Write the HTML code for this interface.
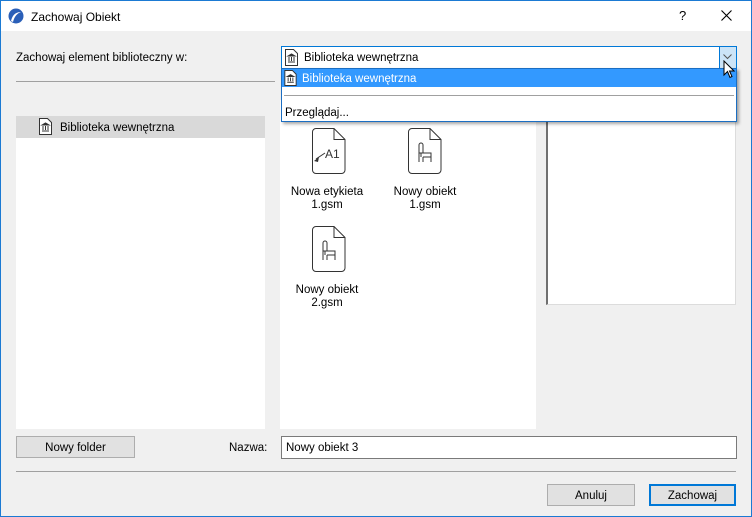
<!DOCTYPE html>
<html><head><meta charset="utf-8"><style>
*{margin:0;padding:0;box-sizing:border-box}
body{width:752px;height:517px;overflow:hidden;font-family:"Liberation Sans",sans-serif;font-size:11.5px;color:#000;background:#f0f0f0;position:relative}
.a{position:absolute}
.win{left:0;top:0;width:752px;height:517px;border:1px solid #1b7ad3;background:#f0f0f0}
.title{left:1px;top:1px;width:750px;height:30px;background:#fff}
.btn{background:#e1e1e1;border:1px solid #adadad;text-align:center;line-height:22px}
.lbl{text-align:center;line-height:13px;width:80px}
</style></head><body>
<div class="a win"></div>
<div class="a title"></div>
<svg class="a" style="left:8px;top:8px" width="16" height="16" viewBox="0 0 16 16"><circle cx="8" cy="8" r="7.5" fill="#2a5fb8"/><path d="M3 13 Q5 4 13 4 Q7 6 5 14Z" fill="#fff"/></svg>
<div class="a" style="left:31px;top:10px;font-size:12px">Zachowaj Obiekt</div>
<div class="a" style="left:679px;top:8px;font-size:13px">?</div>
<svg class="a" style="left:721px;top:10px" width="11" height="11"><path d="M0.5 0.5L10.5 10.5M10.5 0.5L0.5 10.5" stroke="#000" stroke-width="1.1"/></svg>

<div class="a" style="left:16px;top:52px">Zachowaj element biblioteczny w:</div>
<div class="a" style="left:16px;top:81px;width:259px;height:1px;background:#a0a0a0"></div>

<div class="a" style="left:16px;top:116px;width:249px;height:313px;background:#fff"></div>
<div class="a" style="left:16px;top:116px;width:249px;height:22px;background:#d9d9d9"></div>
<svg class="a" style="left:39px;top:118px" width="13" height="17" viewBox="0 0 13 17"><path d="M0.5 0.5H8.5L12.5 4.5V16.5H0.5Z" fill="#fff" stroke="#333"/><path d="M3 7L6.5 5L10 7ZM3 13H10M4 8V12M6.5 8V12M9 8V12" stroke="#333" fill="#333"/></svg>
<div class="a" style="left:60px;top:122px">Biblioteka wewnętrzna</div>

<div class="a" style="left:280px;top:100px;width:256px;height:329px;background:#fff"></div>
<svg class="a" style="left:312px;top:128px" width="34" height="46" viewBox="0 0 34 46"><path d="M4 .5H22L33 11.5V42a3.5 3.5 0 0 1-3.5 3.5H4A3.5 3.5 0 0 1 .5 42V4A3.5 3.5 0 0 1 4 .5Z" fill="#fff" stroke="#333"/><path d="M22 .5V11.5H33" fill="none" stroke="#333"/><text x="13" y="30" font-family="Liberation Sans" font-size="12" fill="#333">A1</text><path d="M13 25L4 31" stroke="#333" fill="none"/><path d="M2 33L7 29L6 34Z" fill="#333"/></svg>
<div class="a lbl" style="left:287px;top:186px">Nowa etykieta<br>1.gsm</div>
<svg class="a" style="left:408px;top:128px" width="34" height="46" viewBox="0 0 34 46"><path d="M4 .5H22L33 11.5V42a3.5 3.5 0 0 1-3.5 3.5H4A3.5 3.5 0 0 1 .5 42V4A3.5 3.5 0 0 1 4 .5Z" fill="#fff" stroke="#333"/><path d="M22 .5V11.5H33" fill="none" stroke="#333"/><path d="M11 34V17a2 2 0 0 1 4 0V25H23V34M11 25H15M15 29H23M15 29V34M13 25V29" fill="none" stroke="#333"/></svg>
<div class="a lbl" style="left:385px;top:186px">Nowy obiekt<br>1.gsm</div>
<svg class="a" style="left:312px;top:226px" width="34" height="46" viewBox="0 0 34 46"><path d="M4 .5H22L33 11.5V42a3.5 3.5 0 0 1-3.5 3.5H4A3.5 3.5 0 0 1 .5 42V4A3.5 3.5 0 0 1 4 .5Z" fill="#fff" stroke="#333"/><path d="M22 .5V11.5H33" fill="none" stroke="#333"/><path d="M11 34V17a2 2 0 0 1 4 0V25H23V34M11 25H15M15 29H23M15 29V34M13 25V29" fill="none" stroke="#333"/></svg>
<div class="a lbl" style="left:287px;top:284px">Nowy obiekt<br>2.gsm</div>

<div class="a" style="left:546px;top:100px;width:190px;height:205px;background:#fff;border:1px solid #dcdcdc;border-left:2px solid #707070"></div>

<div class="a" style="left:281px;top:46px;width:456px;height:23px;background:#fff;border:1px solid #0078d7"></div>
<div class="a" style="left:719px;top:47px;width:17px;height:21px;background:#cce4f7;border-left:1px solid #0078d7"></div>
<svg class="a" style="left:723px;top:54px" width="9" height="6"><path d="M.5 .5L4.5 4.5L8.5 .5" stroke="#555" fill="none"/></svg>
<svg class="a" style="left:285px;top:49px" width="13" height="17" viewBox="0 0 13 17"><path d="M0.5 0.5H8.5L12.5 4.5V16.5H0.5Z" fill="#fff" stroke="#333"/><path d="M3 7L6.5 5L10 7ZM3 13H10M4 8V12M6.5 8V12M9 8V12" stroke="#333" fill="#333"/></svg>
<div class="a" style="left:304px;top:52px">Biblioteka wewnętrzna</div>

<div class="a" style="left:281px;top:68px;width:456px;height:54px;background:#fff;border:1px solid #1b6ec2;box-shadow:2px 2px 3px rgba(0,0,0,.35)"></div>
<div class="a" style="left:282px;top:69px;width:454px;height:18px;background:#3399ff"></div>
<svg class="a" style="left:284px;top:70px" width="13" height="16" viewBox="0 0 13 17"><path d="M0.5 0.5H8.5L12.5 4.5V16.5H0.5Z" fill="#fff" stroke="#333"/><path d="M3 7L6.5 5L10 7ZM3 13H10M4 8V12M6.5 8V12M9 8V12" stroke="#333" fill="#333"/></svg>
<div class="a" style="left:302px;top:73px;color:#fff">Biblioteka wewnętrzna</div>
<div class="a" style="left:284px;top:95px;width:450px;height:1px;background:#a0a0a0"></div>
<div class="a" style="left:285px;top:107px">Przeglądaj...</div>
<svg class="a" style="left:723px;top:60px" width="12" height="20"><path d="M1 1V15L4.5 11.5L7 17.5L9 16.5L6.5 11H11Z" fill="#fff" stroke="#000"/></svg>

<div class="a btn" style="left:16px;top:436px;width:119px;height:22px">Nowy folder</div>
<div class="a" style="left:229px;top:442px">Nazwa:</div>
<div class="a" style="left:281px;top:436px;width:456px;height:23px;background:#fff;border:1px solid #7a7a7a;padding:5px 4px">Nowy obiekt 3</div>
<div class="a" style="left:16px;top:471px;width:720px;height:1px;background:#a0a0a0"></div>
<div class="a btn" style="left:547px;top:484px;width:88px;height:22px">Anuluj</div>
<div class="a btn" style="left:649px;top:484px;width:87px;height:22px;border:2px solid #0078d7;line-height:20px">Zachowaj</div>
</body></html>
